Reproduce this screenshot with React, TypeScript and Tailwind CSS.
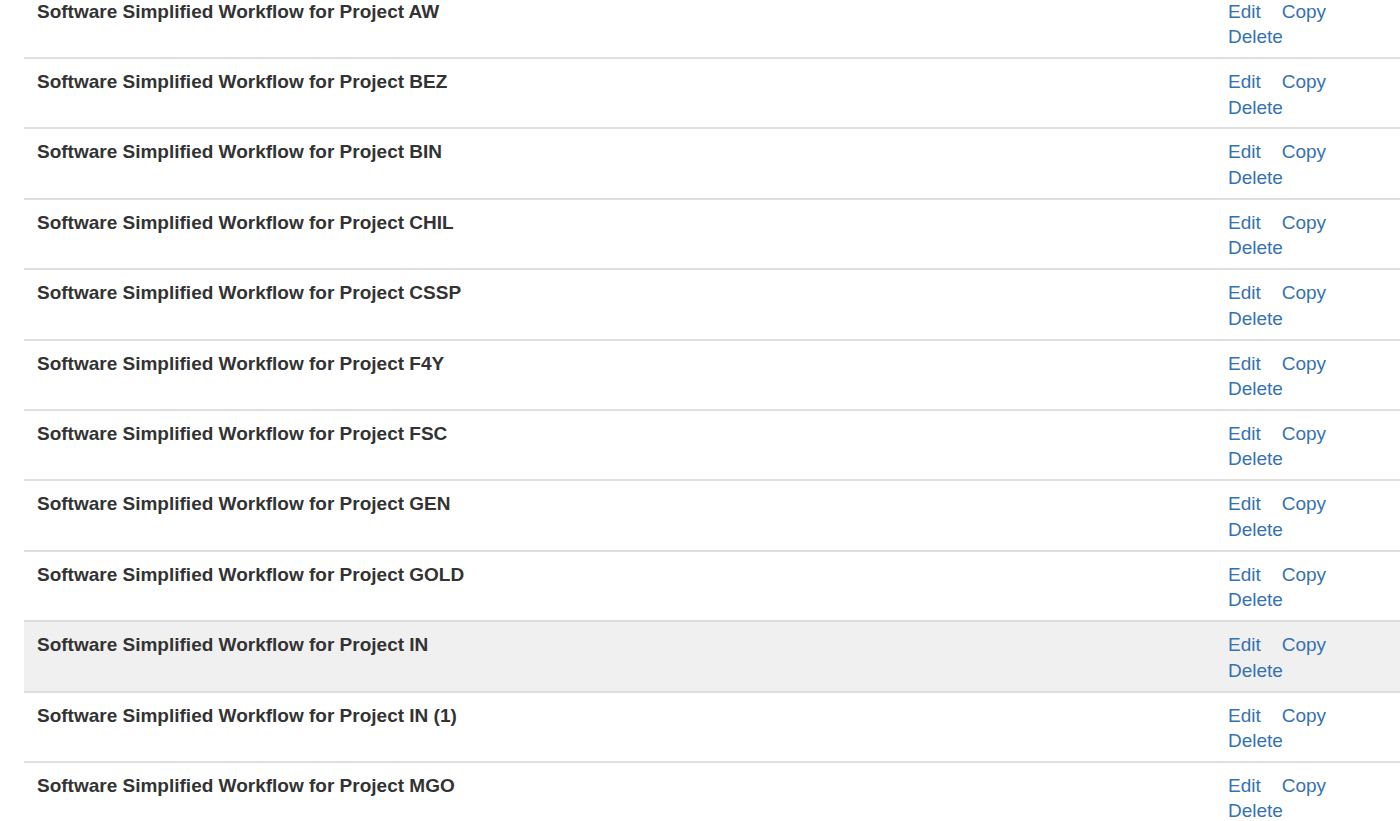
const workflows = [
  "AW",
  "BEZ",
  "BIN",
  "CHIL",
  "CSSP",
  "F4Y",
  "FSC",
  "GEN",
  "GOLD",
  "IN",
  "IN (1)",
  "MGO",
];

function WorkflowRow({ project, active }: { project: string; active?: boolean }) {
  return (
    <div
      className={`flex h-[70.4px] border-t-2 border-[#dedede] pl-[13px] pt-[10px] ${
        active ? "bg-[#f0f0f0]" : "bg-white"
      }`}
    >
      <div className="flex-1 font-bold text-[#333333] leading-[25.5px]">
        Software Simplified Workflow for Project {project}
      </div>
      <div className="w-[172px] text-[#3572b0] leading-[25.5px]">
        <div className="flex gap-[21px]">
          <a href="#" className="hover:underline">Edit</a>
          <a href="#" className="hover:underline">Copy</a>
        </div>
        <a href="#" className="hover:underline">Delete</a>
      </div>
    </div>
  );
}

export default function App() {
  return (
    <div
      className="h-[821px] w-[1400px] overflow-hidden bg-white text-[19px]"
      style={{ fontFamily: '"Liberation Sans", Arial, sans-serif' }}
    >
      <div className="-mt-[13.4px] pl-[24px]">
        {workflows.map((p) => (
          <WorkflowRow key={p} project={p} active={p === "IN"} />
        ))}
      </div>
    </div>
  );
}
